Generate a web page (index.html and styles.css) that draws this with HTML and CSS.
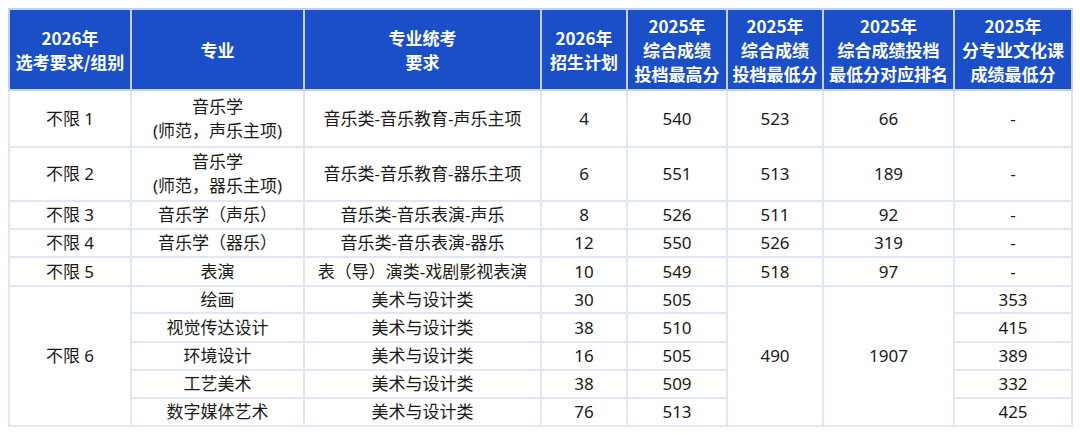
FILE: index.html
```html
<!DOCTYPE html>
<html lang="zh">
<head>
<meta charset="utf-8">
<link rel="stylesheet" href="styles.css">
</head>
<body>
<table class="grid">
  <colgroup>
    <col class="c1"><col class="c2"><col class="c3"><col class="c4"><col class="c5"><col class="c6"><col class="c7"><col class="c8">
  </colgroup>
  <thead>
    <tr class="head">
      <th>2026年<br>选考要求/组别</th>
      <th>专业</th>
      <th>专业统考<br>要求</th>
      <th>2026年<br>招生计划</th>
      <th>2025年<br>综合成绩<br>投档最高分</th>
      <th>2025年<br>综合成绩<br>投档最低分</th>
      <th>2025年<br>综合成绩投档<br>最低分对应排名</th>
      <th>2025年<br>分专业文化课<br>成绩最低分</th>
    </tr>
  </thead>
  <tbody>
    <tr class="r1">
      <td>不限 1</td><td>音乐学<br>(师范，声乐主项)</td><td>音乐类-音乐教育-声乐主项</td><td>4</td><td>540</td><td>523</td><td>66</td><td>-</td>
    </tr>
    <tr class="r2">
      <td>不限 2</td><td>音乐学<br>(师范，器乐主项)</td><td>音乐类-音乐教育-器乐主项</td><td>6</td><td>551</td><td>513</td><td>189</td><td>-</td>
    </tr>
    <tr class="r">
      <td>不限 3</td><td>音乐学（声乐）</td><td>音乐类-音乐表演-声乐</td><td>8</td><td>526</td><td>511</td><td>92</td><td>-</td>
    </tr>
    <tr class="r">
      <td>不限 4</td><td>音乐学（器乐）</td><td>音乐类-音乐表演-器乐</td><td>12</td><td>550</td><td>526</td><td>319</td><td>-</td>
    </tr>
    <tr class="r r5">
      <td>不限 5</td><td>表演</td><td>表（导）演类-戏剧影视表演</td><td>10</td><td>549</td><td>518</td><td>97</td><td>-</td>
    </tr>
    <tr class="r r6">
      <td rowspan="5">不限 6</td><td>绘画</td><td>美术与设计类</td><td>30</td><td>505</td><td rowspan="5">490</td><td rowspan="5">1907</td><td>353</td>
    </tr>
    <tr class="r r7">
      <td>视觉传达设计</td><td>美术与设计类</td><td>38</td><td>510</td><td>415</td>
    </tr>
    <tr class="r">
      <td>环境设计</td><td>美术与设计类</td><td>16</td><td>505</td><td>389</td>
    </tr>
    <tr class="r">
      <td>工艺美术</td><td>美术与设计类</td><td>38</td><td>509</td><td>332</td>
    </tr>
    <tr class="r">
      <td>数字媒体艺术</td><td>美术与设计类</td><td>76</td><td>513</td><td>425</td>
    </tr>
  </tbody>
</table>
</body>
</html>
```

FILE: styles.css
```css
html, body {
  margin: 0;
  padding: 0;
  background: #ffffff;
}
body {
  padding: 8px 0 0 8px;
  font-family: "Noto Sans", "Noto Sans CJK SC", sans-serif;
  color: #1a1a1a;
}
.grid {
  border-collapse: collapse;
  table-layout: fixed;
  width: 1063px;
  font-size: 17px;
}
.c1 { width: 122px; }
.c2 { width: 173px; }
.c3 { width: 237px; }
.c4 { width: 86px; }
.c5 { width: 100px; }
.c6 { width: 96px; }
.c7 { width: 131px; }
.c8 { width: 118px; }
.grid th,
.grid td {
  padding: 0;
  text-align: center;
  vertical-align: middle;
  border: 2px solid #dfe6f6;
}
.head th {
  height: 79px;
  background: #1b4fc8;
  color: #ffffff;
  font-weight: 700;
  line-height: 24px;
  border-color: #c5d3f3;
  font-family: "Noto Sans CJK SC", sans-serif;
  font-size: 17px;
}
.grid td {
  line-height: 22px;
}
.r1 td,
.r2 td {
  line-height: 24px;
}
.r1 td { height: 55px; }
.r2 td { height: 52px; }
.r td { height: 26px; }
.r5 td { height: 27px; }
.r6 td { height: 25px; }
.r7 td { height: 27px; }
```
